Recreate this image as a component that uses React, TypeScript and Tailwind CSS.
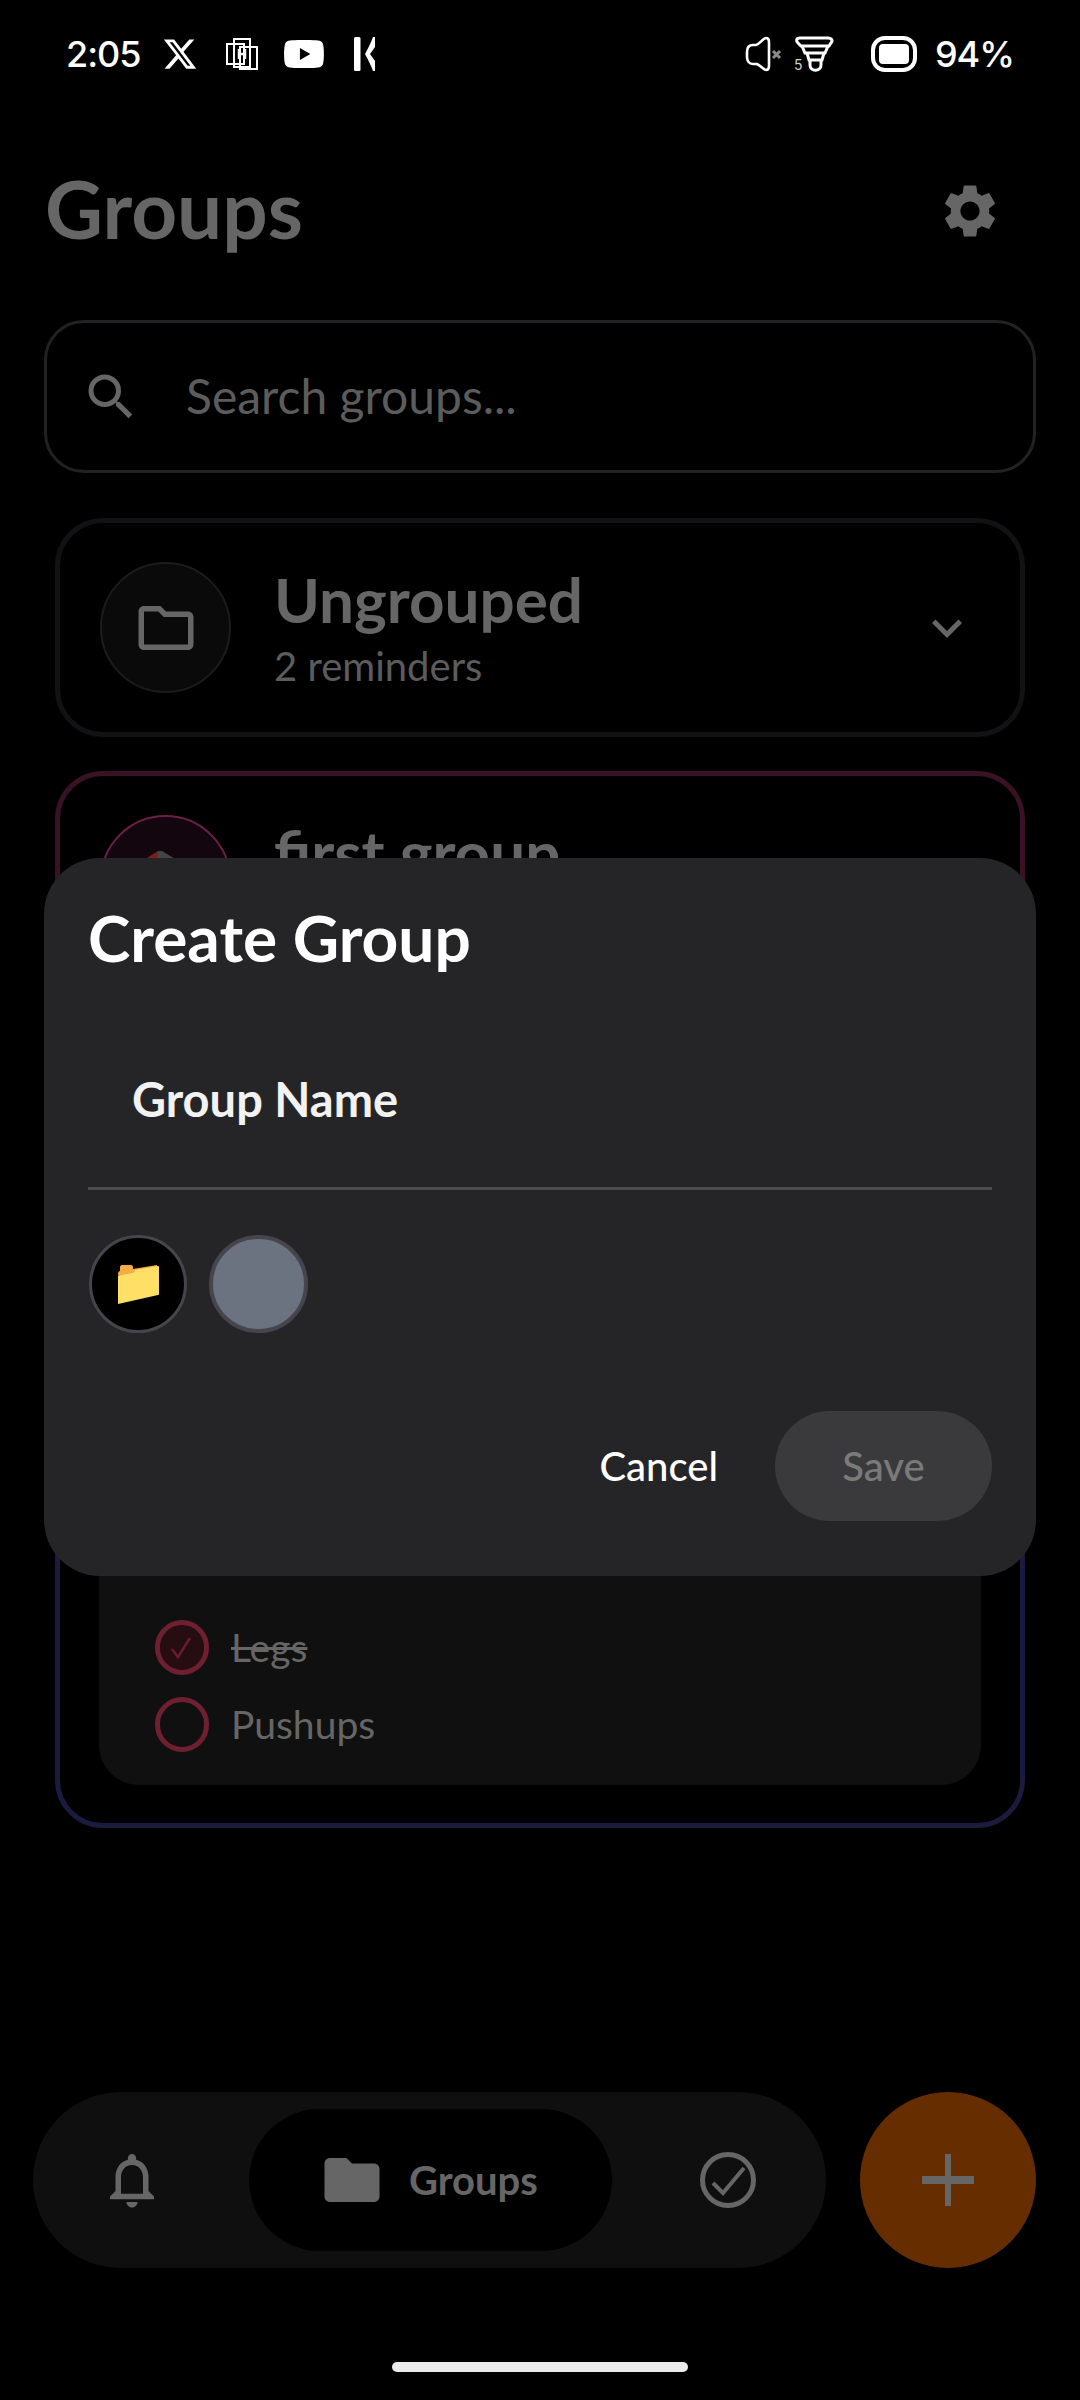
import { FaYoutube } from 'react-icons/fa';
import { FaXTwitter } from 'react-icons/fa6';
import { MdFolder, MdOutlineFolder, MdOutlineNotifications, MdSearch, MdSettings, MdKeyboardArrowDown } from 'react-icons/md';

function StatusBar() {
  return (
    <div className="flex h-[106px] items-center justify-between pl-[66px] pr-[66px] pt-[1px] font-['Inter',sans-serif] text-[36px] font-medium text-white">
      <div className="flex items-center">
        <span className="w-[96px] tracking-[-1px]">2:05</span>
        <FaXTwitter className="h-[36px] w-[36px]" />
        {/* app notification icon */}
        <svg className="ml-[28px] h-[32px] w-[32px]" viewBox="0 0 32 32" fill="none" stroke="white" strokeWidth="2">
          <rect x="1" y="6" width="17" height="20" />
          <rect x="8" y="1" width="16" height="28" />
          <rect x="14" y="9" width="17" height="22" />
          <path d="M13 11v10M19 11v10M13 16h6" strokeWidth="2.5" />
        </svg>
        <FaYoutube className="ml-[25px] h-[46px] w-[42px]" />
        <svg className="ml-[28px] h-[34px] w-[24px]" viewBox="0 0 24 34" fill="white">
          <rect x="1" y="0" width="6.5" height="34" rx="1.5" />
          <path d="M22 0v10l-5 7 5 7v10h-2c-2-6-5-11-8-17 3-6 6-11 8-17z" />
        </svg>
      </div>
      <div className="flex items-center">
        <svg className="h-[36px] w-[38px]" viewBox="0 0 38 36" fill="none">
          <path d="M22 2c3 0 3 2 3 4v24c0 3-1 4-3 4-2 0-5-4-9-6H9c-4 0-6-3-6-7v-5c0-4 2-7 6-7h3c4-1 7-7 10-7z" stroke="white" strokeWidth="2.6" />
          <path d="M29 15l7 7M36 15l-7 7" stroke="#8a8a8a" strokeWidth="3" />
        </svg>
        <div className="relative ml-[12px] h-[36px] w-[40px]">
          <svg className="h-[36px] w-[40px]" viewBox="0 0 40 36" fill="none" stroke="white" strokeWidth="3">
            <path d="M6 2h28c4 0 5 3 3 5l-2 3H7L4 7C2 5 2 2 6 2z" />
            <path d="M8 10l3 7h20l3-7" />
            <path d="M13 17l2 7h13l2-7" />
            <path d="M16 24v5c0 7 11 7 11 0v-5" />
          </svg>
          <span className="absolute -bottom-[1px] left-[0px] text-[14px] leading-[16px] font-normal text-[#d0d0d0]">5</span>
        </div>
        <svg className="ml-[37px] h-[36px] w-[46px]" viewBox="0 0 46 36">
          <rect x="2" y="2" width="42" height="32" rx="12" fill="none" stroke="white" strokeWidth="4" />
          <rect x="8" y="8" width="30" height="20" rx="4" fill="white" />
        </svg>
        <span className="ml-[18px] tracking-[-1px]">94%</span>
      </div>
    </div>
  );
}

interface GroupCardProps {
  name: string;
  sub: string;
  borderClass: string;
  circleClass: string;
  icon: React.ReactNode;
}

function GroupCard({ name, sub, borderClass, circleClass, icon }: GroupCardProps) {
  return (
    <div className={`mx-[11px] flex h-[219px] items-center rounded-[48px] border-[5px] pl-[40px] pr-[43px] ${borderClass}`}>
      <div className={`flex h-[131px] w-[131px] shrink-0 items-center justify-center overflow-hidden rounded-full border-[2px] ${circleClass}`}>
        {icon}
      </div>
      <div className="ml-[43px] flex-1">
        <div className="h-[70px] text-[62px] font-bold leading-[64px] text-[#666]">{name}</div>
        <div className="mt-[7px] h-[44px] text-[40px] leading-[44px] text-[#5c5c5c]">{sub}</div>
      </div>
      {name === 'Ungrouped' && <MdKeyboardArrowDown className="h-[60px] w-[60px] text-[#666]" />}
    </div>
  );
}

function TaskRow({ label, done }: { label: string; done?: boolean }) {
  return (
    <div className="flex h-[55px] items-center">
      <div className={`flex h-[55px] w-[54px] items-center justify-center rounded-full border-[5px] border-[#6e1f30] ${done ? 'bg-[#250d12]' : ''}`}>
        {done && (
          <svg className="h-[34px] w-[34px]" viewBox="0 0 34 34" fill="none" stroke="#6a1c2c" strokeWidth="2.5">
            <path d="M7 18l6 8L25 7" />
          </svg>
        )}
      </div>
      <span className={`ml-[22px] text-[39px] text-[#666] ${done ? 'line-through' : ''}`}>{label}</span>
    </div>
  );
}

function NavBar() {
  return (
    <div className="flex items-center justify-between pl-[33px] pr-[44px]">
      <div className="flex h-[176px] w-[793px] items-center rounded-full bg-[#0f0f0f] pl-[66px]">
        <MdOutlineNotifications className="h-[66px] w-[66px] text-[#666]" />
        <div className="ml-[84px] flex h-[142px] w-[363px] items-center rounded-full bg-black pl-[70px]">
          <MdFolder className="h-[66px] w-[66px] text-[#666]" />
          <span className="ml-[24px] text-[40px] font-bold text-[#666]">Groups</span>
        </div>
        <svg className="ml-[86px] h-[60px] w-[60px]" viewBox="0 0 60 60" fill="none" stroke="#666">
          <circle cx="30" cy="30" r="25.5" strokeWidth="5" />
          <path d="M15 33l10 10 21-25" strokeWidth="4" />
        </svg>
      </div>
      <div className="flex h-[176px] w-[176px] items-center justify-center rounded-full bg-[#662e00]">
        <svg className="h-[52px] w-[52px]" viewBox="0 0 52 52" fill="#666">
          <rect x="23" y="0" width="6" height="52" />
          <rect x="0" y="22" width="52" height="8" />
        </svg>
      </div>
    </div>
  );
}

function CreateGroupDialog() {
  return (
    <div className="absolute left-[44px] top-[858px] flex h-[718px] w-[992px] flex-col rounded-[56px] bg-[#252527] px-[44px]">
      <h2 className="mt-[46px] text-[64px] font-bold leading-[68px] text-white">Create Group</h2>
      <div className="mt-[102px] pl-[44px] text-[47px] font-bold leading-[50px] text-[#f2f2f2]">Group Name</div>
      <div className="mt-[63px] h-[3px] bg-[#4c4c4e]" />
      <div className="mt-[45px] flex gap-[22px] pl-[1px]">
        <div className="flex h-[98px] w-[98px] items-center justify-center rounded-full border-[3px] border-[#46454d] bg-black">
          <svg className="h-[44px] w-[44px]" viewBox="0 0 44 44">
            <path d="M2 12c0-2 1-3 2-3V5c0-1 1-2 2-2h9c1 0 2 1 2 2v2l24-4v8L4 20z" fill="#f5ac46" />
            <path d="M2 14l14-3c2 0 3-1 3-3l23-4c1 0 1 1 1 1v27c0 1-1 1-1 1L2 42z" fill="#ffe066" />
          </svg>
        </div>
        <div className="h-[98px] w-[99px] rounded-full border-[4px] border-[#46454d] bg-[#6b7280]" />
      </div>
      <div className="mt-[78px] flex items-center justify-end">
        <span className="text-[40px] font-medium text-white">Cancel</span>
        <div className="ml-[57px] flex h-[110px] w-[217px] items-center justify-center rounded-full bg-[#3a3a3c] text-[40px] font-medium text-[#7a7a7a]">
          Save
        </div>
      </div>
    </div>
  );
}

export default function App() {
  return (
    <div className="relative flex h-[2400px] w-[1080px] flex-col overflow-hidden bg-black font-['Lato',sans-serif]">
      <StatusBar />

      <div className="mt-[49px] flex h-[112px] items-center justify-between pl-[45px] pr-[78px]">
        <h1 className="pb-[6px] text-[80px] font-bold leading-[96px] text-[#666]">Groups</h1>
        <MdSettings className="h-[64px] w-[64px] text-[#666]" />
      </div>

      <div className="mx-[44px] mt-[53px] flex h-[153px] items-center rounded-[40px] border-[3px] border-[#222224] pl-[34px]">
        <MdSearch className="h-[60px] w-[60px] text-[#666]" />
        <span className="ml-[45px] pb-[2px] text-[48px] text-[#5c5c5c]">Search groups...</span>
      </div>

      <div className="mx-[44px] mt-[45px] flex flex-col gap-[34px]">
        <GroupCard
          name="Ungrouped"
          sub="2 reminders"
          borderClass="border-[#121214]"
          circleClass="border-[#1c1c1c] bg-[#0a0a0a]"
          icon={<MdOutlineFolder className="h-[66px] w-[66px] text-[#666]" />}
        />
        <GroupCard
          name="first group"
          sub=""
          borderClass="border-[#3a1226]"
          circleClass="border-[#6b2048] bg-[#14060e]"
          icon={
            <svg className="h-[60px] w-[60px]" viewBox="0 0 60 60">
              <path d="M22 0L0 14v46h60V20z" fill="#7a2018" />
              <path d="M22 0L26 0L46 12L20 12z" fill="#444" />
            </svg>
          }
        />
        <div className="mx-[11px] flex h-[804px] flex-col justify-end rounded-[48px] border-[5px] border-[#1b1b40] px-[39px] pb-[38px]">
          <div className="flex h-[560px] flex-col justify-end gap-[22px] rounded-[40px] bg-[#101010] pb-[33px] pl-[56px]">
            <TaskRow label="Legs" done />
            <TaskRow label="Pushups" />
          </div>
        </div>
      </div>

      <div className="mt-auto">
        <NavBar />
        <div className="mx-auto mb-[28px] mt-[94px] h-[10px] w-[296px] rounded-full bg-[#ebebeb]" />
      </div>

      <CreateGroupDialog />
    </div>
  );
}
